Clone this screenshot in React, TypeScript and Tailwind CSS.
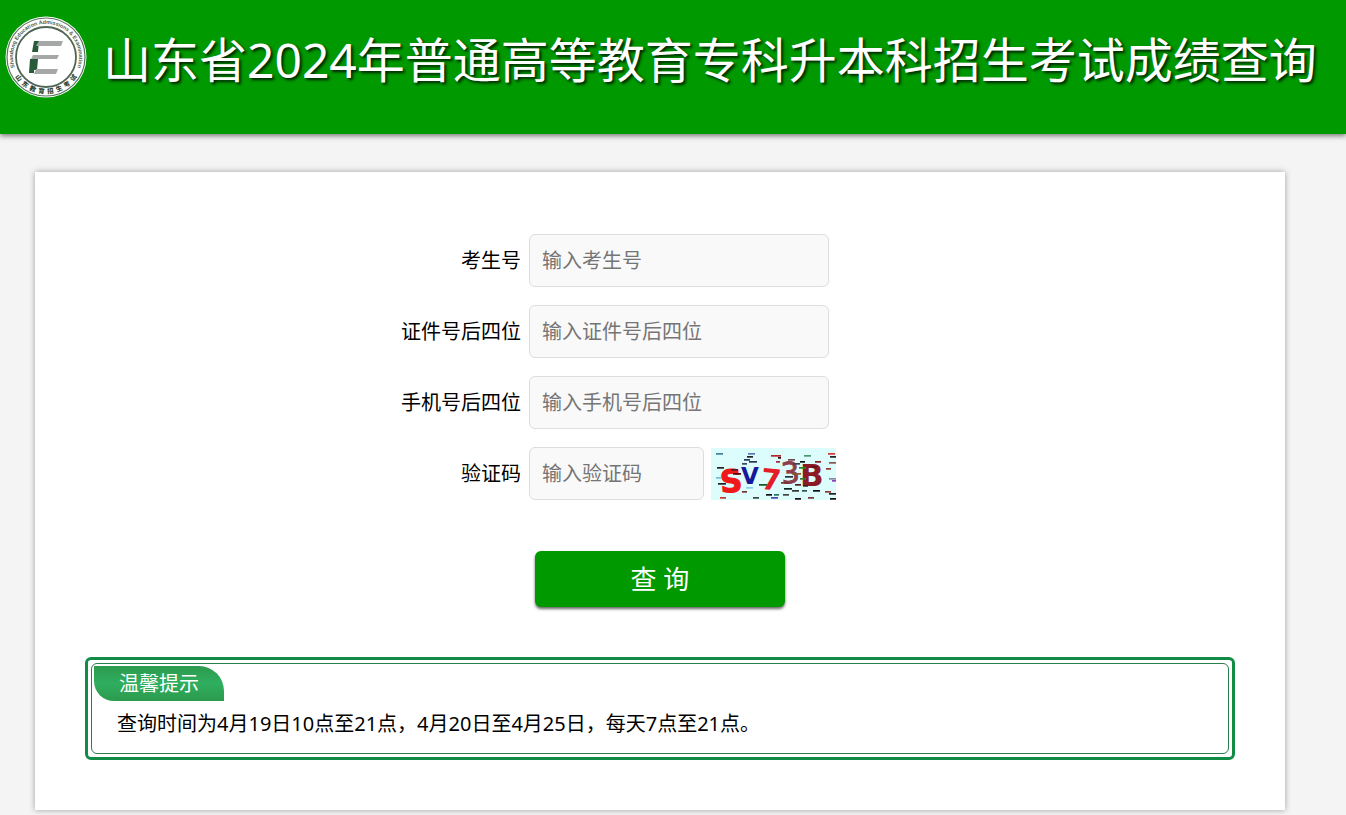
import React from 'react';

const fields = [
  { id: 'candidate', label: '考生号', hint: '输入考生号' },
  { id: 'idcard', label: '证件号后四位', hint: '输入证件号后四位' },
  { id: 'phone', label: '手机号后四位', hint: '输入手机号后四位' },
];

const inputClass =
  'h-[53px] rounded-md border border-[#dddddd] bg-[#f9f9f9] px-3 text-xl text-black placeholder:text-[#757575] outline-none';

// x, y, width, colour
const noise: [number, number, number, string][] = [
  [5, 5, 7, '#3f7f9f'], [37, 5, 7, '#5a78b8'], [36, 8, 6, '#222'], [60, 7, 10, '#b02a2a'], [67, 9, 3, '#400'],
  [93, 7, 7, '#4a9a70'], [117, 5, 7, '#d33'], [119, 8, 6, '#222'], [33, 11, 6, '#223a66'], [38, 13, 8, '#335'],
  [65, 13, 4, '#a24'], [77, 11, 7, '#744'], [89, 13, 5, '#111'], [104, 13, 6, '#822'], [118, 14, 7, '#855'],
  [31, 15, 5, '#446'], [82, 15, 7, '#444'], [6, 19, 7, '#222'], [20, 21, 7, '#422'], [100, 18, 6, '#611'],
  [88, 19, 7, '#282'], [115, 20, 5, '#933'], [22, 25, 8, '#500'], [81, 25, 9, '#853'],
  [5, 29, 5, '#7bd'], [74, 28, 8, '#234'], [89, 30, 6, '#373'], [118, 30, 7, '#88a'], [7, 35, 8, '#222'],
  [48, 36, 8, '#152'], [70, 34, 8, '#733'], [84, 36, 6, '#422'], [121, 32, 4, '#84b'],
  [35, 39, 7, '#8ce'], [73, 40, 8, '#122'], [92, 37, 5, '#322'], [81, 42, 7, '#333'],
  [91, 42, 5, '#355'], [102, 42, 7, '#111'], [114, 43, 6, '#933'], [118, 45, 7, '#222'], [31, 43, 5, '#733'],
  [55, 46, 6, '#111'], [63, 46, 5, '#276'], [72, 46, 6, '#444'], [9, 49, 6, '#c33'], [42, 49, 6, '#444'],
  [60, 49, 7, '#54a'], [84, 50, 6, '#111'], [97, 49, 6, '#733'], [119, 50, 6, '#111'],
];

function Captcha() {
  return (
    <svg viewBox="0 0 125 52" className="h-[52px] w-[125px]" role="img" aria-label="验证码">
      <rect width="125" height="52" fill="#dcfdfb" />
      <g fontFamily="'DejaVu Sans', sans-serif" fontWeight="700">
        <text x="9" y="44" fontSize="31" fill="#f01818" stroke="#f01818" transform="rotate(-4 20 32)">S</text>
        <text x="30" y="36" fontSize="23" fill="#15189a">V</text>
        <text x="50" y="42" fontSize="29" fill="#e51c25" transform="rotate(5 60 32)">7</text>
        <text x="70" y="35" fontSize="29" fontWeight="400" fill="#8f3f4c" stroke="#8f3f4c" transform="rotate(-5 79 24)">3</text>
        <text x="89" y="38" fontSize="31" fill="#8b1a25">B</text>
      </g>
      {noise.map(([x, y, w, c], i) => (
        <rect key={i} x={x} y={y} width={w} height="1.7" fill={c} />
      ))}
    </svg>
  );
}

function Logo() {
  return (
    <svg viewBox="0 0 82 82" className="size-[82px] shrink-0" aria-hidden="true">
      <defs>
        <path id="ring-top" d="M10.7 54A33 33 0 1 1 71.3 54" />
        <path id="ring-bottom" d="M4.3 41A36.7 36.7 0 0 0 77.7 41" />
      </defs>
      <circle cx="41" cy="41" r="40.5" fill="#fff" />
      <circle cx="41" cy="41" r="39" fill="none" stroke="#5b7461" strokeWidth="1.2" />
      <circle cx="41" cy="41" r="30" fill="#fff" stroke="#4f6655" strokeWidth="1.8" />
      <text fontFamily="'Liberation Sans', sans-serif" fontWeight="700" fontSize="5.4" fill="#4b5f50">
        <textPath href="#ring-top" startOffset="50%" textAnchor="middle">Shandong Education Admissions &amp; Examination</textPath>
      </text>
      <text fontFamily="'Noto Sans CJK SC', sans-serif" fontWeight="900" fontSize="6.4" fill="#2f4635">
        <textPath href="#ring-bottom" startOffset="50%" textAnchor="middle">{'山东教育招生考试'.split('').join('\u2002')}</textPath>
      </text>
      <path d="M29 25h5l-1 11h-6zM25 43h8l-1 11h-3v3h-5z" fill="#285c38" />
      <path d="M34 25h24l-2 5H31zM28 39h26l-2 4H26zM31 53h22l-2 5H29z" fill="#a5a8a7" />
    </svg>
  );
}

export default function App() {
  return (
    <div className="min-h-screen bg-[#f4f4f4] pb-[5px] font-['Noto_Sans','Noto_Sans_CJK_SC',sans-serif] text-xl text-black">
      <header className="flex h-[134px] items-start gap-4 bg-[#009900] pt-4 pl-[5px] shadow-[0_2px_5px_rgba(0,0,0,0.5)]">
        <Logo />
        <h1 className="pt-2 text-5xl leading-[72px] whitespace-nowrap text-white [text-shadow:2px_2px_3px_rgba(0,0,0,0.8)]">
          山东省2024年普通高等教育专科升本科招生考试成绩查询
        </h1>
      </header>

      <main className="mt-[38px] mr-[61px] ml-[35px] bg-white px-[50px] pt-[62px] pb-[50px] shadow-[0_0_6px_rgba(0,0,0,0.35)]">
        <form onSubmit={(e) => e.preventDefault()}>
          <div className="mx-auto grid w-[518px] grid-cols-[120px_1fr] items-center gap-x-2 gap-y-[18px]">
            {fields.map((f) => (
              <React.Fragment key={f.id}>
                <label htmlFor={f.id} className="text-right whitespace-nowrap">{f.label}</label>
                <input id={f.id} type="text" placeholder={f.hint} className={`${inputClass} w-[300px]`} />
              </React.Fragment>
            ))}
            <label htmlFor="code" className="text-right whitespace-nowrap">验证码</label>
            <div className="flex items-center gap-[7px]">
              <input id="code" type="text" placeholder="输入验证码" className={`${inputClass} w-[175px]`} />
              <Captcha />
            </div>
          </div>
          <button
            type="submit"
            className="mx-auto mt-[51px] block h-14 w-[250px] rounded-md bg-[#009900] text-[26px] leading-[56px] text-white shadow-[0_2px_3px_rgba(0,0,0,0.6)]"
          >
            查 询
          </button>
        </form>

        <section className="mt-[50px] rounded-md border-3 border-[#118c46] p-[3px]">
          <div className="rounded-md border border-[#2a7f4c] px-[2px] pt-[2px] pb-[14px]">
            <h2 className="flex h-[35px] w-[130px] items-center justify-center rounded-tr-[25px] rounded-bl-[20px] bg-linear-to-b from-[#2c9a4c] via-[#2fae60] to-[#2c9a4c] text-white">
              温馨提示
            </h2>
            <p className="pt-2 pl-[23px] leading-[30px]">
              查询时间为4月19日10点至21点，4月20日至4月25日，每天7点至21点。
            </p>
          </div>
        </section>
      </main>
    </div>
  );
}
